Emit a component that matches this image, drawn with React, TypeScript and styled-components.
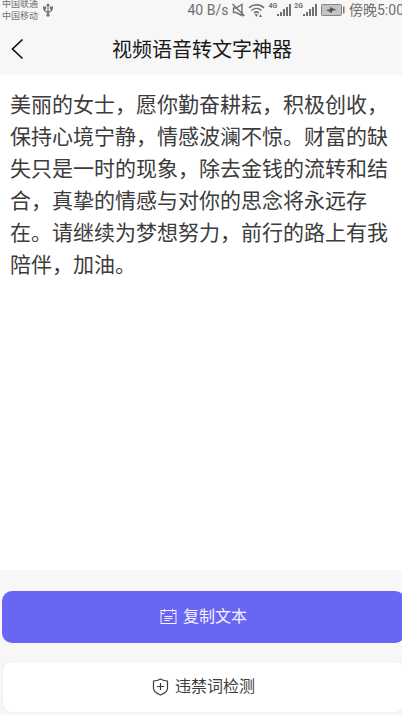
import React from "react";
import styled, { createGlobalStyle } from "styled-components";

const GlobalStyle = createGlobalStyle`
  * { box-sizing: border-box; }
  body {
    margin: 0;
    background: #f7f7f7;
    font-family: Roboto, "Noto Sans CJK SC", sans-serif;
  }
`;

const Page = styled.div`
  display: flex;
  flex-direction: column;
  min-height: 100vh;
  overflow: hidden;
`;

const StatusBar = styled.div`
  display: flex;
  align-items: center;
  justify-content: space-between;
  height: 20px;
  margin-right: -2px;
  padding-left: 2px;
  color: #707070;
  white-space: nowrap;
`;

const StatusGroup = styled.div<{ $gap: number }>`
  display: flex;
  align-items: center;
  gap: ${(p) => p.$gap}px;
`;

const Carriers = styled.div`
  font-size: 9px;
  line-height: 12px;
`;

const StatusText = styled.span`
  font-size: 14px;
  line-height: 20px;
`;

const Signal = styled.span`
  display: flex;
  align-items: flex-start;
`;

const Generation = styled.span`
  font-size: 7px;
  font-weight: 700;
  line-height: 7px;
`;

const Glyph = styled.svg`
  display: block;
  flex: none;
`;

const Header = styled.header`
  display: grid;
  grid-template-columns: 40px 1fr 38px;
  align-items: center;
  height: 55px;
  padding-top: 2px;
`;

const BackButton = styled.button`
  display: flex;
  align-items: center;
  height: 40px;
  padding: 0 0 0 10px;
  border: 0;
  background: none;
  color: #111;
  cursor: pointer;
`;

const Title = styled.h1`
  margin: 0;
  padding-top: 2px;
  color: #1a1a1a;
  font-size: 20px;
  font-weight: 400;
  line-height: 28px;
  text-align: center;
`;

const Content = styled.main`
  flex: 1;
  padding: 14px 10px;
  background: #fff;
`;

const Transcript = styled.p`
  margin: 0;
  color: #3c3c3c;
  font-size: 21px;
  line-height: 32px;
`;

const Actions = styled.footer`
  display: flex;
  flex-direction: column;
  gap: 18px;
  margin-right: -3px;
  padding: 21px 0 2px 2px;
`;

const ActionButton = styled.button<{ $primary?: boolean }>`
  display: flex;
  align-items: center;
  justify-content: center;
  gap: 6px;
  height: 52px;
  padding: 0 0 1px;
  border: ${(p) => (p.$primary ? "0" : "1px solid #efefef")};
  border-radius: 10px;
  background: ${(p) => (p.$primary ? "#6966f5" : "#fff")};
  color: ${(p) => (p.$primary ? "#f4f4ff" : "#3c3c3c")};
  font-family: inherit;
  font-size: 16px;
  line-height: 24px;
  cursor: pointer;
`;

const UsbIcon = () => (
  <Glyph width="10" height="14" viewBox="0 0 10 14" fill="none" stroke="currentColor" aria-hidden="true">
    <path d="M5 2v10M1.500 5v2.500L5 10l3.500-2.500V5" strokeWidth="1.200" />
    <path d="M5 0 7 3H3zM0 3.500h3v3H0zM7 3.500h3v3H7z" fill="currentColor" stroke="none" />
    <circle cx="5" cy="12" r="1.700" fill="currentColor" stroke="none" />
  </Glyph>
);

const MuteIcon = () => (
  <Glyph width="13" height="14" viewBox="0 0 13 14" fill="none" stroke="currentColor" strokeWidth="1.400" aria-hidden="true">
    <path d="M1.500 5h2.500L10 1.500v11L4 9.500H1.500z" />
    <path d="m.5 1 12 12" />
  </Glyph>
);

const WifiIcon = () => (
  <Glyph width="17" height="14" viewBox="0 0 17 14" fill="none" stroke="currentColor" strokeWidth="1.600" aria-hidden="true">
    <path d="M1 4.800c4.200-4 10.800-4 15 0M3.500 7.500c3-2.700 7-2.700 10 0M6 10c1.500-1.300 3.500-1.300 5 0" />
    <path d="m6.500 11 2 3 1.500-3zM11 14l1.500-3 1.500 3z" fill="currentColor" stroke="none" />
  </Glyph>
);

const SignalBars = () => (
  <Glyph width="14" height="14" viewBox="0 0 14 14" fill="currentColor" aria-hidden="true">
    <path d="M0 11h2v2H0zM3 9h2v4H3zM6 6h2v7H6zM9 4h2v9H9zM12 1h2v12h-2z" />
  </Glyph>
);

const BatteryIcon = () => (
  <Glyph width="24" height="12" viewBox="0 0 24 12" aria-hidden="true">
    <rect x=".5" y=".5" width="20" height="11" rx="1" fill="#c4c4c4" stroke="#858585" />
    <path d="M22 2.500h1.500v7H22z" fill="#777" />
    <path d="m5 6 4-.8V3l6.500 3-4.500.8V9z" fill="#555" />
  </Glyph>
);

const BackIcon = () => (
  <Glyph width="14" height="22" viewBox="0 0 14 22" fill="none" stroke="currentColor" strokeWidth="1.700" aria-hidden="true">
    <path d="M12.500 1.500 2.500 11l10 9.500" />
  </Glyph>
);

const NoteIcon = () => (
  <Glyph width="17" height="17" viewBox="0 0 17 17" fill="none" stroke="currentColor" aria-hidden="true">
    <rect x="1" y="2.500" width="15" height="13" />
    <path d="M1 5.500h3.500M12.500 5.500H16M4.500 1v3M12.500 1v3M4.500 8.500h8M4.500 10.500h8M4.500 12.500h5" />
  </Glyph>
);

const ShieldIcon = () => (
  <Glyph width="17" height="18" viewBox="0 0 17 18" fill="none" stroke="currentColor" strokeWidth="1.200" aria-hidden="true">
    <path d="M8.500 1c2 1.300 4.500 2 7 2v7.500c0 3-2.500 4.500-7 6.500-4.500-2-7-3.500-7-6.500V3c2.500 0 5-.7 7-2z" />
    <path d="M8.500 5v7M5 8.500h7" />
  </Glyph>
);

export default function App() {
  return (
    <Page>
      <GlobalStyle />
      <StatusBar>
        <StatusGroup $gap={5}>
          <Carriers>
            <div>中国联通</div>
            <div>中国移动</div>
          </Carriers>
          <UsbIcon />
        </StatusGroup>
        <StatusGroup $gap={4}>
          <StatusText>40 B/s</StatusText>
          <StatusGroup $gap={3}>
            <MuteIcon />
            <WifiIcon />
            <Signal>
              <Generation>4G</Generation>
              <SignalBars />
            </Signal>
            <Signal>
              <Generation>2G</Generation>
              <SignalBars />
            </Signal>
          </StatusGroup>
          <BatteryIcon />
          <StatusText>傍晚5:00</StatusText>
        </StatusGroup>
      </StatusBar>
      <Header>
        <BackButton type="button" aria-label="返回">
          <BackIcon />
        </BackButton>
        <Title>视频语音转文字神器</Title>
      </Header>
      <Content>
        <Transcript>
          美丽的女士，愿你勤奋耕耘，积极创收，保持心境宁静，情感波澜不惊。财富的缺失只是一时的现象，除去金钱的流转和结合，真挚的情感与对你的思念将永远存在。请继续为梦想努力，前行的路上有我陪伴，加油。
        </Transcript>
      </Content>
      <Actions>
        <ActionButton type="button" $primary>
          <NoteIcon />
          复制文本
        </ActionButton>
        <ActionButton type="button">
          <ShieldIcon />
          违禁词检测
        </ActionButton>
      </Actions>
    </Page>
  );
}
